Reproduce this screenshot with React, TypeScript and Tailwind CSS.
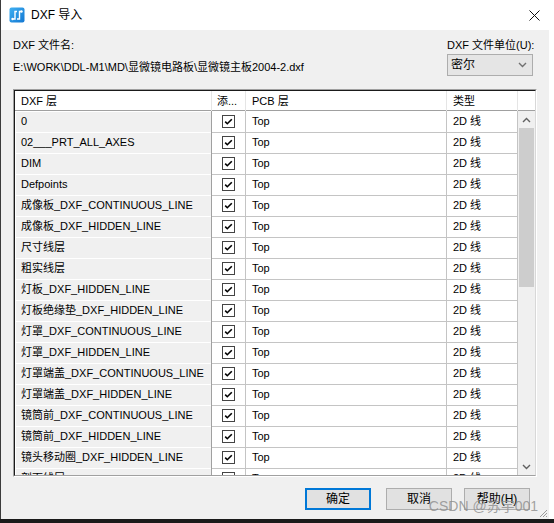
import React from "react";

const FONT = "font-['Liberation_Sans','Noto_Sans_CJK_SC',sans-serif]";

const layers = [
  "0",
  "02___PRT_ALL_AXES",
  "DIM",
  "Defpoints",
  "成像板_DXF_CONTINUOUS_LINE",
  "成像板_DXF_HIDDEN_LINE",
  "尺寸线层",
  "粗实线层",
  "灯板_DXF_HIDDEN_LINE",
  "灯板绝缘垫_DXF_HIDDEN_LINE",
  "灯罩_DXF_CONTINUOUS_LINE",
  "灯罩_DXF_HIDDEN_LINE",
  "灯罩端盖_DXF_CONTINUOUS_LINE",
  "灯罩端盖_DXF_HIDDEN_LINE",
  "镜筒前_DXF_CONTINUOUS_LINE",
  "镜筒前_DXF_HIDDEN_LINE",
  "镜头移动圈_DXF_HIDDEN_LINE",
  "剖面线层",
];

function AppIcon() {
  return (
    <svg width="16" height="16" viewBox="0 0 16 16">
      <defs>
        <linearGradient id="ico" x1="0" y1="0" x2="1" y2="1">
          <stop offset="0" stopColor="#3fb0f2" />
          <stop offset="1" stopColor="#1377d2" />
        </linearGradient>
      </defs>
      <rect x="0.5" y="0.5" width="15" height="15" rx="2" fill="url(#ico)" />
      <path d="M3.5 12 H6 V4.5 H8" stroke="#fff" strokeWidth="1.4" fill="none" />
      <path d="M8 12 H10.5 V4.5 H12.5" stroke="#fff" strokeWidth="1.4" fill="none" />
      <circle cx="3.5" cy="12" r="1.2" fill="#fff" />
      <circle cx="12.5" cy="4.5" r="1.2" fill="#fff" />
    </svg>
  );
}

function Chevron({ up = false, color = "#606060" }: { up?: boolean; color?: string }) {
  return (
    <svg width="9" height="6" viewBox="0 0 9 6">
      <path
        d={up ? "M1 5 L4.5 1.5 L8 5" : "M1 1 L4.5 4.5 L8 1"}
        stroke={color}
        strokeWidth="1.4"
        fill="none"
      />
    </svg>
  );
}

function Check() {
  return (
    <div className="flex h-[13px] w-[13px] items-center justify-center border border-[#444] bg-white">
      <svg width="11" height="11" viewBox="0 0 11 11">
        <path d="M2.2 5.6 L4.3 7.7 L8.8 3.2" stroke="#000" strokeWidth="1.6" fill="none" />
      </svg>
    </div>
  );
}

function Button({ label, primary = false }: { label: string; primary?: boolean }) {
  return (
    <div
      className={
        primary
          ? "flex h-[22px] w-[66px] items-center justify-center border-2 border-[#0078d7] bg-[#e1e1e1] text-[12px]"
          : "flex h-[22px] w-[66px] items-center justify-center border border-[#adadad] bg-[#e1e1e1] text-[12px]"
      }
    >
      {label}
    </div>
  );
}

function LayerTable() {
  return (
    <div className="ml-[12px] mt-[13px] h-[388px] w-[524px] border-b border-l border-r border-t border-b-white border-l-[#a0a0a0] border-r-white border-t-[#a0a0a0]">
      <div className="flex h-full w-full flex-col overflow-hidden border-b border-l border-r border-t border-b-[#a0a0a0] border-l-[#1a1a1a] border-r-[#d8d8d8] border-t-[#1a1a1a] bg-white">
        <div className="grid h-[20px] shrink-0 grid-cols-[197px_34px_201px_71px_17px] border-b border-[#a0a0a0] leading-[20px]">
          <div className="border-r border-[#e5e5e5] pl-[6px]">DXF 层</div>
          <div className="border-r border-[#e5e5e5] pl-[5px]">添...</div>
          <div className="border-r border-[#e5e5e5] pl-[6px]">PCB 层</div>
          <div className="border-r border-[#e5e5e5] pl-[6px]">类型</div>
          <div />
        </div>
        <div className="flex min-h-0 flex-1">
          <div className="w-[503px] overflow-hidden">
            {layers.map((name) => (
              <div key={name} className="grid h-[21px] grid-cols-[197px_34px_201px_71px]">
                <div className="overflow-hidden whitespace-nowrap border-b border-r border-[#a0a0a0] bg-[#f0f0f0] pl-[6px] leading-[21px] shadow-[inset_1px_1px_0_#ffffff]">
                  {name}
                </div>
                <div className="flex items-center justify-center border-b border-r border-[#c4c4c4]">
                  <Check />
                </div>
                <div className="border-b border-r border-[#c4c4c4] pl-[6px] leading-[21px]">Top</div>
                <div className="border-b border-r border-[#c4c4c4] pl-[6px] leading-[21px]">2D 线</div>
              </div>
            ))}
          </div>
          <div className="flex w-[17px] flex-col bg-[#f0f0f0]">
            <div className="flex h-[17px] items-center justify-center">
              <Chevron up />
            </div>
            <div className="mx-px h-[159px] bg-[#cdcdcd]" />
            <div className="flex-1" />
            <div className="flex h-[17px] items-center justify-center">
              <Chevron />
            </div>
          </div>
        </div>
      </div>
    </div>
  );
}

export default function App() {
  return (
    <div className={`flex h-[523px] w-[554px] flex-col overflow-hidden bg-[#1a1a1a] text-[11px] text-black ${FONT}`}>
      <div className="flex h-[519px] shrink-0">
        <div className="w-px bg-[#3c3c3c]" />
        <div className="relative flex w-[548px] flex-col bg-[#f0f0f0]">
          <div className="flex h-[30px] shrink-0 items-center bg-white pl-[8px] pr-[9px]">
            <AppIcon />
            <span className="ml-[6px] text-[12px]">DXF 导入</span>
            <div className="flex-1" />
            <svg width="11" height="11" viewBox="0 0 11 11">
              <path d="M0.5 0.5 L10.5 10.5 M10.5 0.5 L0.5 10.5" stroke="#111" strokeWidth="1" />
            </svg>
          </div>

          <div className="flex px-[12px] pt-[8px]">
            <div className="flex-1">
              <div className="leading-[14px]">DXF 文件名:</div>
              <div className="mt-[8px] leading-[14px]">{"E:\\WORK\\DDL-M1\\MD\\显微镜电路板\\显微镜主板2004-2.dxf"}</div>
            </div>
            <div className="w-[90px]">
              <div className="leading-[14px]">DXF 文件单位(U):</div>
              <div className="mt-[2px] flex h-[22px] w-[86px] items-center justify-between border border-[#adadad] bg-[#e5e5e5] pl-[3px] pr-[5px]">
                <span className="text-[12px]">密尔</span>
                <Chevron color="#707070" />
              </div>
            </div>
          </div>

          <LayerTable />

          <div className="mt-[11px] flex justify-end pr-[19px]">
            <Button label="确定" primary />
            <div className="ml-[15px]">
              <Button label="取消" />
            </div>
            <div className="ml-[12px]">
              <Button label="帮助(H)" />
            </div>
          </div>

          <div className="pointer-events-none absolute bottom-[5px] right-[11px] text-[14px] leading-[16px] text-[#8c8c8c]/80">
            CSDN @苏宇001
          </div>

          <svg className="absolute bottom-[1px] right-[1px]" width="10" height="10" viewBox="0 0 10 10">
            <path d="M9 2 L2 9 M9 5 L5 9 M9 8 L8 9" stroke="#9a9a9a" strokeWidth="1" />
          </svg>
        </div>
        <div className="flex-1 bg-white" />
      </div>
    </div>
  );
}
